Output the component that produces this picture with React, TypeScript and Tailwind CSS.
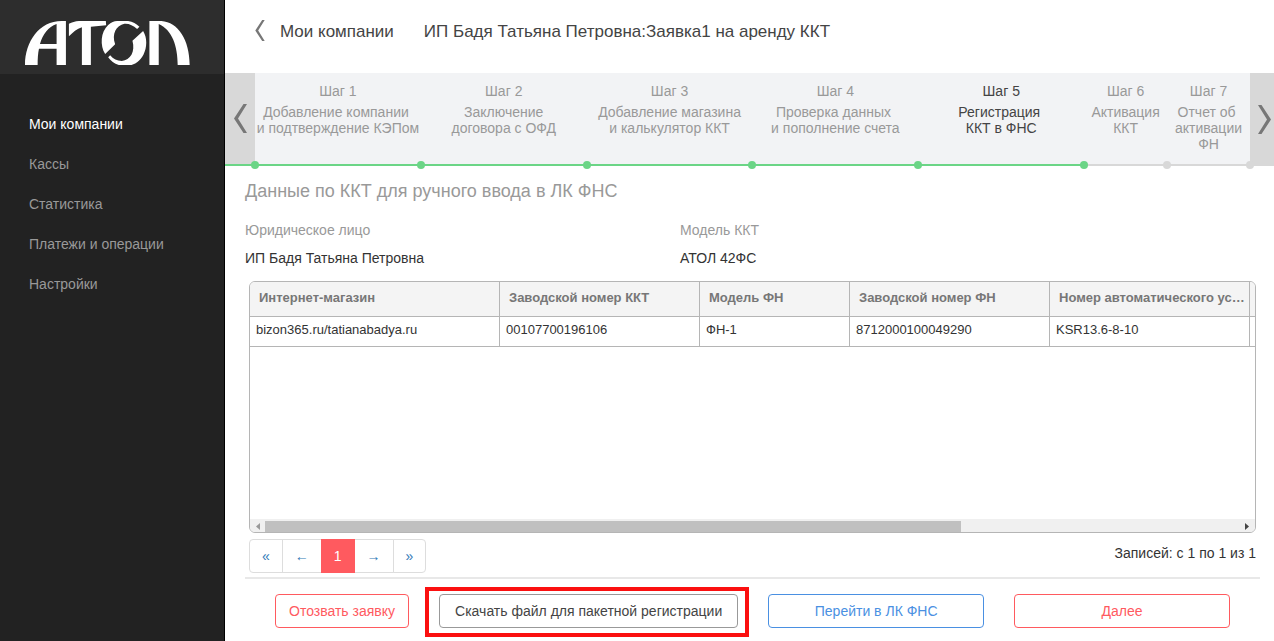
import clsx from "clsx";

const menu = ["Мои компании", "Кассы", "Статистика", "Платежи и операции", "Настройки"];

interface Step {
  lines: string[];
  wide: boolean;
  passed: boolean;
}

const steps: Step[] = [
  { lines: ["Добавление компании\u00a0", "и подтверждение КЭПом"], wide: true, passed: true },
  { lines: ["Заключение", "договора с ОФД"], wide: true, passed: true },
  { lines: ["Добавление магазина", "и калькулятор ККТ"], wide: true, passed: true },
  { lines: ["Проверка данных\u00a0", "и пополнение счета"], wide: true, passed: true },
  { lines: ["Регистрация\u00a0", "ККТ в ФНС"], wide: true, passed: true },
  { lines: ["Активация", "ККТ"], wide: false, passed: false },
  { lines: ["Отчет об\u00a0", "активации", "ФН"], wide: false, passed: false },
];

const currentStep = 5;

const columns = [
  { title: "Интернет-магазин", width: "w-[250px]" },
  { title: "Заводской номер ККТ", width: "w-[200px]" },
  { title: "Модель ФН", width: "w-[150px]" },
  { title: "Заводской номер ФН", width: "w-[200px]" },
  { title: "Номер автоматического ус…", width: "w-[200px]" },
];

const rows = [
  ["bizon365.ru/tatianabadya.ru", "00107700196106", "ФН-1", "8712000100049290", "KSR13.6-8-10"],
];

const pages = ["«", "←", "1", "→", "»"];

const Logo = () => (
  <svg viewBox="75 63 496 132" className="h-11 w-[165px]" fill="#fff" role="img" aria-label="АТОЛ">
    <path
      fillRule="evenodd"
      d="M75 195C75 125 118 63 185 63H198V195H170V146H117C114 160 113 176 113 195ZM120 132H170V72C145 80 128 104 120 132Z"
    />
    <path d="M207 109V71C216 67 226 64 237 63H318L319 76L273 80V195H246V82C231 87 219 97 207 109Z" />
    <path d="M316 162C300 138 302 96 325 75C334 67 343 63 352 63H385C399 65 410 72 419 80L412 87C400 76 388 70 374 71C349 76 335 102 346 133Z" />
    <path d="M430 93C443 113 442 143 431 164C421 183 404 195 390 195H357C343 191 333 183 325 172L331 166C340 177 352 183 366 183C392 180 407 155 398 122Z" />
    <path d="M449 63H485C535 66 570 120 570 195H534C534 140 518 90 477 72V195H449Z" />
  </svg>
);

const Chevron = ({ className, flip }: { className: string; flip?: boolean }) => (
  <svg viewBox="0 0 13 29" className={clsx(className, flip && "rotate-180")} fill="#777">
    <path d="M9.5 0H13L4 14.5L13 29H9.5L0 14.5Z" />
  </svg>
);

const Sidebar = () => (
  <aside className="w-[225px] shrink-0 border-r border-black bg-[#222]">
    <div className="h-[74px] bg-[#2d2d2d] pt-[21px] pl-[25px]">
      <Logo />
    </div>
    <nav className="flex flex-col gap-5 pt-10 pl-[29px]">
      {menu.map((item, i) => (
        <a key={item} href="#" className={clsx("leading-5", i === 0 ? "text-white" : "text-[#999]")}>
          {item}
        </a>
      ))}
    </nav>
  </aside>
);

const Steps = () => (
  <div className="flex h-[93px] bg-[#f2f3f5]">
    <button
      type="button"
      aria-label="Назад"
      className="flex w-[30px] shrink-0 items-center justify-center border-b-2 border-[#6bd586] bg-[#d8d8d8]"
    >
      <Chevron className="h-[29px] w-[13px]" />
    </button>
    <ol className="flex min-w-0 flex-1 text-center leading-4">
      {steps.map((step, i) => (
        <li
          key={i}
          className={clsx(
            "relative min-w-0 border-b-2 pt-[10px]",
            step.wide ? "flex-[2]" : "flex-1",
            step.passed ? "border-[#6bd586]" : "border-[#d8d8d8]",
            i + 1 === currentStep ? "text-[#444]" : "text-[#999]"
          )}
        >
          <div>Шаг {i + 1}</div>
          <div className="mt-[5px] whitespace-nowrap">
            {step.lines.map((line) => (
              <div key={line}>{line}</div>
            ))}
          </div>
          <span
            className={clsx(
              "absolute -bottom-[5px] -left-1 z-10 size-2 rounded-full",
              i <= currentStep ? "bg-[#6bd586]" : "bg-[#d8d8d8]"
            )}
          />
          {i === steps.length - 1 && (
            <span className="absolute -right-1 -bottom-[5px] z-10 size-2 rounded-full bg-[#d8d8d8]" />
          )}
        </li>
      ))}
    </ol>
    <button
      type="button"
      aria-label="Вперед"
      className="flex w-6 shrink-0 items-center justify-end bg-[#d8d8d8] pr-[3px]"
    >
      <Chevron className="h-[29px] w-[13px]" flip />
    </button>
  </div>
);

const Grid = () => (
  <div className="mx-1 overflow-hidden rounded-md border border-[#b5b5b5] text-[13px]">
    <div className="h-[237px]">
      <table className="w-full table-fixed border-separate border-spacing-0 text-left">
        <thead>
          <tr className="h-[35px] bg-[#f4f4f4] text-[#777]">
            {columns.map((col) => (
              <th
                key={col.title}
                className={clsx(
                  col.width,
                  "border-r border-b border-[#b5b5b5] pr-1 pb-[2px] pl-[9px] font-bold whitespace-nowrap"
                )}
              >
                {col.title}
              </th>
            ))}
            <th className="border-b border-[#b5b5b5]" />
          </tr>
        </thead>
        <tbody>
          {rows.map((row) => (
            <tr key={row[0]} className="h-[30px] text-[#333]">
              {row.map((cell) => (
                <td key={cell} className="truncate border-r border-b border-[#b5b5b5] px-[6px] pb-[2px]">
                  {cell}
                </td>
              ))}
              <td className="border-b border-[#b5b5b5]" />
            </tr>
          ))}
        </tbody>
      </table>
    </div>
    <div className="flex h-[13px] items-center bg-[#f0f0f0] pt-[2px]">
      <button type="button" aria-label="Влево" className="flex w-[15px] justify-center">
        <svg viewBox="0 0 4 7" className="h-[7px] w-1" fill="#999">
          <path d="M4 0V7L0 3.5Z" />
        </svg>
      </button>
      <div className="flex h-full flex-1">
        <div className="w-5/7 bg-[#c0c0c0]" />
      </div>
      <button type="button" aria-label="Вправо" className="flex w-4 justify-center">
        <svg viewBox="0 0 4 7" className="h-[7px] w-1" fill="#444">
          <path d="M0 0V7L4 3.5Z" />
        </svg>
      </button>
    </div>
  </div>
);

const Pagination = () => (
  <div className="mx-1 mt-[6px] flex justify-between">
    <div className="flex">
      {pages.map((page) => (
        <button
          key={page}
          type="button"
          className={clsx(
            "-ml-px border px-3 py-[6px] leading-5 first:ml-0 first:rounded-l last:rounded-r",
            page === "1"
              ? "z-10 border-[#ff5a5f] bg-[#ff5a5f] text-white"
              : "border-[#ddd] bg-white text-[#337ab7]"
          )}
        >
          {page}
        </button>
      ))}
    </div>
    <p className="pt-1 leading-5 text-[#333]">Записей: с 1 по 1 из 1</p>
  </div>
);

const buttonStyle = "h-[34px] rounded border bg-white";

const App = () => {
  return (
    <div className="flex min-h-screen bg-white font-['Liberation_Sans',Arial,sans-serif] text-sm">
      <Sidebar />
      <main className="min-w-0 flex-1">
        <header className="flex h-[73px] items-start pt-5 pl-[30px] text-[17px] leading-6 text-[#444]">
          <a href="#" className="flex items-start">
            <Chevron className="mr-[15px] h-[21px] w-[10px]" />
            Мои компании
          </a>
          <h1 className="ml-[30px]">ИП Бадя Татьяна Петровна:Заявка1 на аренду ККТ</h1>
        </header>
        <Steps />
        <div className="pt-[13px] pr-[14px] pl-5">
          <h2 className="text-lg leading-6 text-[#999]">Данные по ККТ для ручного ввода в ЛК ФНС</h2>
          <dl className="mt-[17px] mb-[13px] grid grid-cols-[3fr_4fr] leading-5">
            <div>
              <dt className="text-[#999]">Юридическое лицо</dt>
              <dd className="mt-2 text-[#333]">ИП Бадя Татьяна Петровна</dd>
            </div>
            <div>
              <dt className="text-[#999]">Модель ККТ</dt>
              <dd className="mt-2 text-[#333]">АТОЛ 42ФС</dd>
            </div>
          </dl>
          <Grid />
          <Pagination />
          <div className="mt-1 flex gap-[30px] border-t-2 border-[#e8e8e8] px-[30px] pt-[15px]">
            <button type="button" className={clsx(buttonStyle, "border-[#ff5a5f] px-[13px] text-[#ff5a5f]")}>
              Отозвать заявку
            </button>
            <div className="relative">
              <button type="button" className={clsx(buttonStyle, "border-[#999] px-[15px] text-[#444]")}>
                Скачать файл для пакетной регистрации
              </button>
              <span className="pointer-events-none absolute -top-[7px] -right-[11px] -bottom-[9px] -left-[14px] border-4 border-[#fb1010]" />
            </div>
            <button type="button" className={clsx(buttonStyle, "flex-1 border-[#4a90e2] text-[#4a90e2]")}>
              Перейти в ЛК ФНС
            </button>
            <button type="button" className={clsx(buttonStyle, "flex-1 border-[#ff5a5f] text-[#ff5a5f]")}>
              Далее
            </button>
          </div>
        </div>
      </main>
    </div>
  );
};

export default App;
